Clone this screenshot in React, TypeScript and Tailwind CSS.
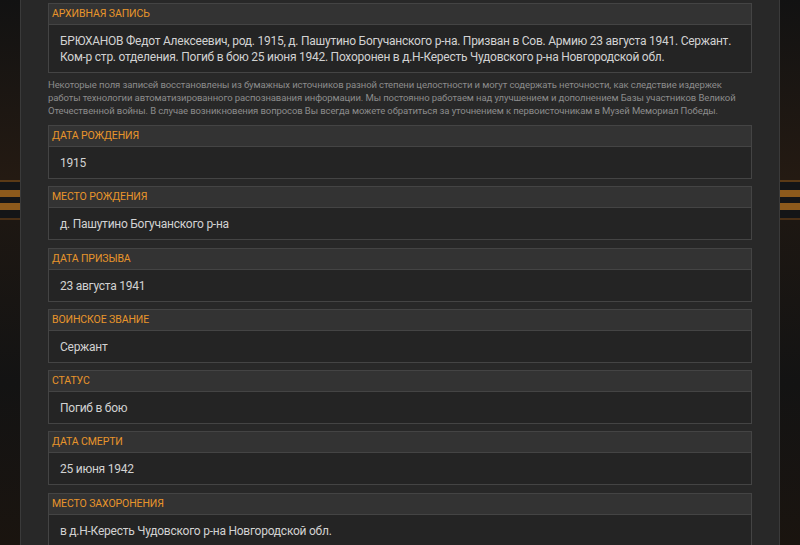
import React from "react";

interface Field {
  label: string;
  value: string;
}

const fields: Field[] = [
  { label: "Дата рождения", value: "1915" },
  { label: "Место рождения", value: "д. Пашутино Богучанского р-на" },
  { label: "Дата призыва", value: "23 августа 1941" },
  { label: "Воинское звание", value: "Сержант" },
  { label: "Статус", value: "Погиб в бою" },
  { label: "Дата смерти", value: "25 июня 1942" },
  { label: "Место захоронения", value: "в д.Н-Кересть Чудовского р-на Новгородской обл." },
];

function Card({ label, children }: { label: string; children: React.ReactNode }) {
  return (
    <div className="border border-[#444] bg-[#242424]">
      <div className="h-[21px] border-b border-[#444] bg-[#333] px-[3px] text-[10.5px] leading-[20px] uppercase tracking-[-0.1px] text-[#e8952b]">
        {label}
      </div>
      <div className="px-[11px] pt-[8px] pb-[7px] text-[12px] leading-[16px] tracking-[-0.25px] text-[#d2d2d2]">{children}</div>
    </div>
  );
}

// полоски георгиевской ленты по краям страницы
function Ribbon() {
  return (
    <div className="flex h-full flex-col">
      <div className="h-[180px] bg-gradient-to-b from-[#121212] to-[#241a12]" />
      <div className="h-[2px] bg-[#5a3a16]" />
      <div className="h-[8px] bg-[#131517]" />
      <div className="h-[7px] bg-[#8c5a1c]" />
      <div className="h-[6px] bg-[#131517]" />
      <div className="h-[7px] bg-[#8c5a1c]" />
      <div className="h-[8px] bg-[#131517]" />
      <div className="h-[2px] bg-[#4a3016]" />
      <div className="flex-1 bg-gradient-to-b from-[#1d1712] via-[#131313] to-[#1a140f]" />
    </div>
  );
}

export default function App() {
  return (
    <div className="flex h-[545px] w-[800px] overflow-hidden bg-[#131313] font-['Roboto',sans-serif]">
      <div className="w-[20px] shrink-0">
        <Ribbon />
      </div>
      <main className="flex w-[760px] shrink-0 flex-col gap-[7.3px] border-x border-[#3a3a3a] bg-[#282828] px-[27px] pt-[3px]">
        <div className="mb-[0.7px]">
          <Card label="Архивная запись">
            БРЮХАНОВ Федот Алексеевич, род. 1915, д. Пашутино Богучанского р-на. Призван в Сов. Армию 23 августа 1941. Сержант.
            <br />
            Ком-р стр. отделения. Погиб в бою 25 июня 1942. Похоронен в д.Н-Кересть Чудовского р-на Новгородской обл.
          </Card>
          <p className="mt-[5px] text-[9.5px] leading-[13px] tracking-[-0.1px] text-[#8c8c8c]">
            Некоторые поля записей восстановлены из бумажных источников разной степени целостности и могут содержать неточности, как следствие издержек
            <br />
            работы технологии автоматизированного распознавания информации. Мы постоянно работаем над улучшением и дополнением Базы участников Великой
            <br />
            Отечественной войны. В случае возникновения вопросов Вы всегда можете обратиться за уточнением к первоисточникам в Музей Мемориал Победы.
          </p>
        </div>
        {fields.map((f) => (
          <Card key={f.label} label={f.label}>
            {f.value}
          </Card>
        ))}
      </main>
      <div className="w-[20px] shrink-0">
        <Ribbon />
      </div>
    </div>
  );
}
